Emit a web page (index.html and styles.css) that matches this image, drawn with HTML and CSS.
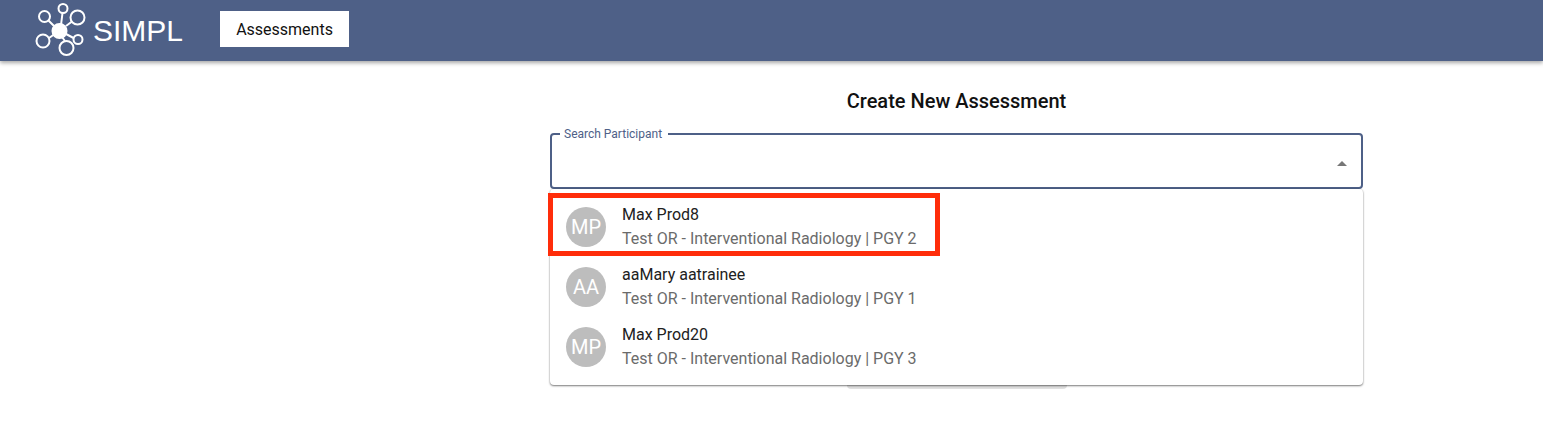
FILE: index.html
```html
<!DOCTYPE html>
<html lang="en">
<head>
  <meta charset="UTF-8">
  <meta name="viewport" content="width=device-width, initial-scale=1.0">
  <title>SIMPL - Create New Assessment</title>
  <link rel="stylesheet" href="styles.css">
</head>
<body>
  <header class="topbar">
    <div class="brand">
      <svg class="brand-logo" width="60" height="60" viewBox="30 0 60 60" aria-hidden="true">
        <g fill="none" stroke="#fff" stroke-width="2">
          <circle cx="63" cy="7.5" r="4.5"/>
          <circle cx="44.5" cy="15.5" r="5.5"/>
          <circle cx="77.5" cy="16.5" r="7"/>
          <circle cx="43" cy="40" r="6.5"/>
          <circle cx="78" cy="38.5" r="4.5"/>
          <circle cx="66.5" cy="47" r="7"/>
          <path d="M61 24 L62.5 12 M54 25 L48.5 19.5 M66 25 L72 20.5 M54 33.5 L49 37 M66 33 L73.5 37 M62 36 L65 40"/>
        </g>
        <circle cx="59.5" cy="30" r="8" fill="#fff"/>
      </svg>
      <span class="brand-name">SIMPL</span>
    </div>
    <button class="nav-btn">Assessments</button>
  </header>

  <main class="content">
    <h1 class="page-title">Create New Assessment</h1>

    <div class="search-wrap">
      <fieldset class="search-field">
        <legend>Search Participant</legend>
        <span class="caret"></span>
      </fieldset>

      <ul class="dropdown">
        <li class="option">
          <span class="avatar">MP</span>
          <div>
            <div class="option-name">Max Prod8</div>
            <div class="option-sub">Test OR - Interventional Radiology | PGY 2</div>
          </div>
        </li>
        <li class="option">
          <span class="avatar">AA</span>
          <div>
            <div class="option-name">aaMary aatrainee</div>
            <div class="option-sub">Test OR - Interventional Radiology | PGY 1</div>
          </div>
        </li>
        <li class="option">
          <span class="avatar">MP</span>
          <div>
            <div class="option-name">Max Prod20</div>
            <div class="option-sub">Test OR - Interventional Radiology | PGY 3</div>
          </div>
        </li>
      </ul>
      <div class="highlight"></div>
    </div>

    <button class="submit-btn">Create</button>
  </main>
</body>
</html>
```

FILE: styles.css
```css
:root {
  --primary-color: #4e6087;
  --text-dark: #212121;
  --text-gray: #6b6b6b;
}

body {
  font-family: Roboto, "Liberation Sans", sans-serif;
  margin: 0;
  height: 432px;
  overflow: hidden;
  background-color: white;
  color: var(--text-dark);
}

.topbar {
  height: 61px;
  background-color: var(--primary-color);
  box-shadow: 0 2px 4px rgba(0,0,0,0.35);
  display: flex;
  align-items: center;
  padding-left: 30px;
  gap: 37px;
}

.brand {
  display: flex;
  align-items: center;
  gap: 3px;
  height: 60px;
}

.brand-name {
  font-family: "Liberation Sans", sans-serif;
  font-size: 30px;
  color: white;
}

.nav-btn {
  width: 129px;
  height: 36px;
  margin-top: -3px;
  background-color: white;
  border: none;
  font-family: inherit;
  font-size: 16px;
  color: #111;
}

.content {
  width: 813px;
  margin-left: 550px;
  display: flex;
  flex-direction: column;
  align-items: center;
}

.page-title {
  margin: 28px 0 21px;
  font-size: 20px;
  line-height: 24px;
  font-weight: 500;
  color: #111;
}

.search-wrap {
  position: relative;
  width: 100%;
}

.search-field {
  box-sizing: border-box;
  position: relative;
  width: 100%;
  height: 61px;
  margin: -6px 0 0;
  padding: 0 8px;
  border: 2px solid var(--primary-color);
  border-radius: 4px;
}

.search-field legend {
  padding: 0 6px 0 4px;
  font-size: 12px;
  line-height: 12px;
  color: var(--primary-color);
}

.caret {
  position: absolute;
  right: 14px;
  top: 21px;
  border-left: 5px solid transparent;
  border-right: 5px solid transparent;
  border-bottom: 5px solid #777;
}

.dropdown {
  position: absolute;
  top: 55px;
  left: 0;
  right: 0;
  z-index: 2;
  margin: 0;
  padding: 8px 0;
  list-style: none;
  background-color: white;
  border-radius: 4px;
  box-shadow: 0 1px 2px rgba(0,0,0,0.5), 0 0 2px rgba(0,0,0,0.12);
}

.option {
  height: 60px;
  display: flex;
  align-items: center;
  gap: 16px;
  padding-left: 16px;
}

.avatar {
  width: 40px;
  height: 40px;
  border-radius: 50%;
  background-color: #bdbdbd;
  color: white;
  font-size: 20px;
  display: flex;
  align-items: center;
  justify-content: center;
}

.option-name {
  font-size: 16px;
  line-height: 24px;
}

.option-sub {
  font-size: 16px;
  line-height: 24px;
  color: var(--text-gray);
}

.highlight {
  position: absolute;
  top: 59px;
  left: -2px;
  width: 392px;
  height: 63px;
  box-sizing: border-box;
  border: 5px solid #ff2d0a;
  z-index: 3;
}

.submit-btn {
  width: 220px;
  height: 36px;
  margin-top: 164px;
  background-color: #e0e0e0;
  border: none;
  border-radius: 4px;
  font-family: inherit;
  font-size: 14px;
}
```
